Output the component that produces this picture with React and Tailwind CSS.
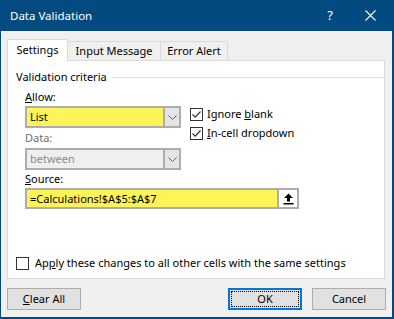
import React from "react";

const font = { fontFamily: '"Noto Sans", "Open Sans", sans-serif' };

const Check = ({ checked }) => (
  <span className="w-[13px] h-[13px] border border-[#333333] bg-white flex items-center justify-center shrink-0">
    {checked && (
      <svg width="11" height="11" viewBox="0 0 11 11">
        <path d="M1.5 5.5 L4.2 8.2 L9.5 2.5" fill="none" stroke="#333" strokeWidth="1.2" />
      </svg>
    )}
  </span>
);

const Chevron = () => (
  <svg width="9" height="5" viewBox="0 0 9 5">
    <path d="M0.5 0.5 L4.5 4.5 L8.5 0.5" fill="none" stroke="#606060" strokeWidth="1" />
  </svg>
);

const Select = ({ value, yellow, disabled }) => (
  <div
    className={`w-[156px] h-[22px] border-2 border-[#adadad] flex ${
      yellow ? "bg-[#fff35a]" : "bg-[#efefef]"
    }`}
  >
    <span
      className={`flex-1 pl-[3px] leading-[18px] ${
        disabled ? "text-[#8a8a8a]" : "text-black"
      }`}
    >
      {value}
    </span>
    <span className="w-[16px] bg-[#e5e5e5] border-l-2 border-[#adadad] flex items-center justify-center">
      <Chevron />
    </span>
  </div>
);

const Button = ({ children, primary }) => (
  <button
    className={`w-[74px] h-[22px] bg-[#e1e1e1] flex items-center justify-center ${
      primary ? "border-2 border-[#0078d7] p-[1px]" : "border border-[#adadad]"
    }`}
  >
    {primary ? (
      <span className="w-full h-full border border-dotted border-black flex items-center justify-center">
        {children}
      </span>
    ) : (
      children
    )}
  </button>
);

export default function App() {
  return (
    <div
      style={font}
      className="w-[394px] h-[319px] bg-[#f0f0f0] border-l border-r-2 border-b-2 border-[#034a80] flex flex-col text-[11px] text-black overflow-hidden"
    >
      {/* Title bar */}
      <div className="h-[31px] bg-[#034a80] text-white flex items-center pl-[9px] shrink-0">
        <span className="flex-1 text-[11.5px]">Data Validation</span>
        <span className="w-[20px] text-center text-[13px] mr-[25px]">?</span>
        <svg width="11" height="11" viewBox="0 0 11 11" className="mr-[16px]">
          <path d="M0.5 0.5 L10.5 10.5 M10.5 0.5 L0.5 10.5" stroke="white" strokeWidth="1.1" />
        </svg>
      </div>

      {/* Tabs */}
      <div className="flex items-end pl-[6px] pt-[7px] h-[29px] shrink-0">
        <div className="w-[61px] h-[22px] bg-white border border-b-0 border-[#d9d9d9] flex items-center justify-center relative top-[1px] z-10">
          Settings
        </div>
        <div className="w-[93px] h-[19px] bg-[#f0f0f0] border border-b-0 border-l-0 border-[#d9d9d9] flex items-center justify-center">
          Input Message
        </div>
        <div className="w-[67px] h-[19px] bg-[#f0f0f0] border border-b-0 border-l-0 border-[#d9d9d9] flex items-center justify-center">
          Error Alert
        </div>
      </div>

      {/* Panel */}
      <div className="ml-[6px] w-[378px] h-[219px] bg-white border border-[#d9d9d9] pl-[8px] pt-[8px] shrink-0">
        <div className="flex items-center h-[16px]">
          <span>Validation criteria</span>
          <span className="flex-1 h-px bg-[#dcdcdc] ml-[5px]" />
        </div>

        <div className="flex ml-[9px] mt-[4px]">
          <div className="flex flex-col w-[156px]">
            <span className="h-[16px] leading-[16px]">
              <u>A</u>llow:
            </span>
            <div className="mt-[1px]">
              <Select value="List" yellow />
            </div>
            <span className="h-[16px] leading-[16px] mt-[2px] text-[#6d6d6d]">Data:</span>
            <div className="mt-[2px]">
              <Select value="between" disabled />
            </div>
          </div>
          <div className="flex flex-col ml-[9px] pt-[19px] gap-[6px]">
            <label className="flex items-center gap-[4px] h-[13px]">
              <Check checked />
              <span>
                Ignore <u>b</u>lank
              </span>
            </label>
            <label className="flex items-center gap-[4px] h-[13px]">
              <Check checked />
              <span>
                <u>I</u>n-cell dropdown
              </span>
            </label>
          </div>
        </div>

        <div className="ml-[9px]">
          <span className="block h-[16px] leading-[16px] mt-[1px]">
            <u>S</u>ource:
          </span>
          <div className="mt-[1px] w-[274px] h-[21px] border-2 border-[#adadad] bg-[#fff35a] flex">
            <span className="flex-1 pl-[3px] leading-[17px]">=Calculations!$A$5:$A$7</span>
            <span className="w-[20px] bg-white border-l-2 border-[#adadad] flex items-center justify-center">
              <svg width="11" height="12" viewBox="0 0 11 12">
                <path d="M5.5 0.5 L10 5 L7 5 L7 8.5 L4 8.5 L4 5 L1 5 Z" fill="black" />
                <rect x="0.5" y="10" width="10" height="1.5" fill="black" />
              </svg>
            </span>
          </div>
        </div>

        <label className="flex items-center gap-[6px] mt-[48px] h-[13px]">
          <Check />
          <span>
            Ap<u>p</u>ly these changes to all other cells with the same settings
          </span>
        </label>
      </div>

      {/* Buttons */}
      <div className="flex items-center pl-[6px] pt-[9px]">
        <Button>
          <span>
            <u>C</u>lear All
          </span>
        </Button>
        <div className="flex-1" />
        <Button primary>OK</Button>
        <div className="w-[10px]" />
        <Button>Cancel</Button>
        <div className="w-[6px]" />
      </div>
    </div>
  );
}
